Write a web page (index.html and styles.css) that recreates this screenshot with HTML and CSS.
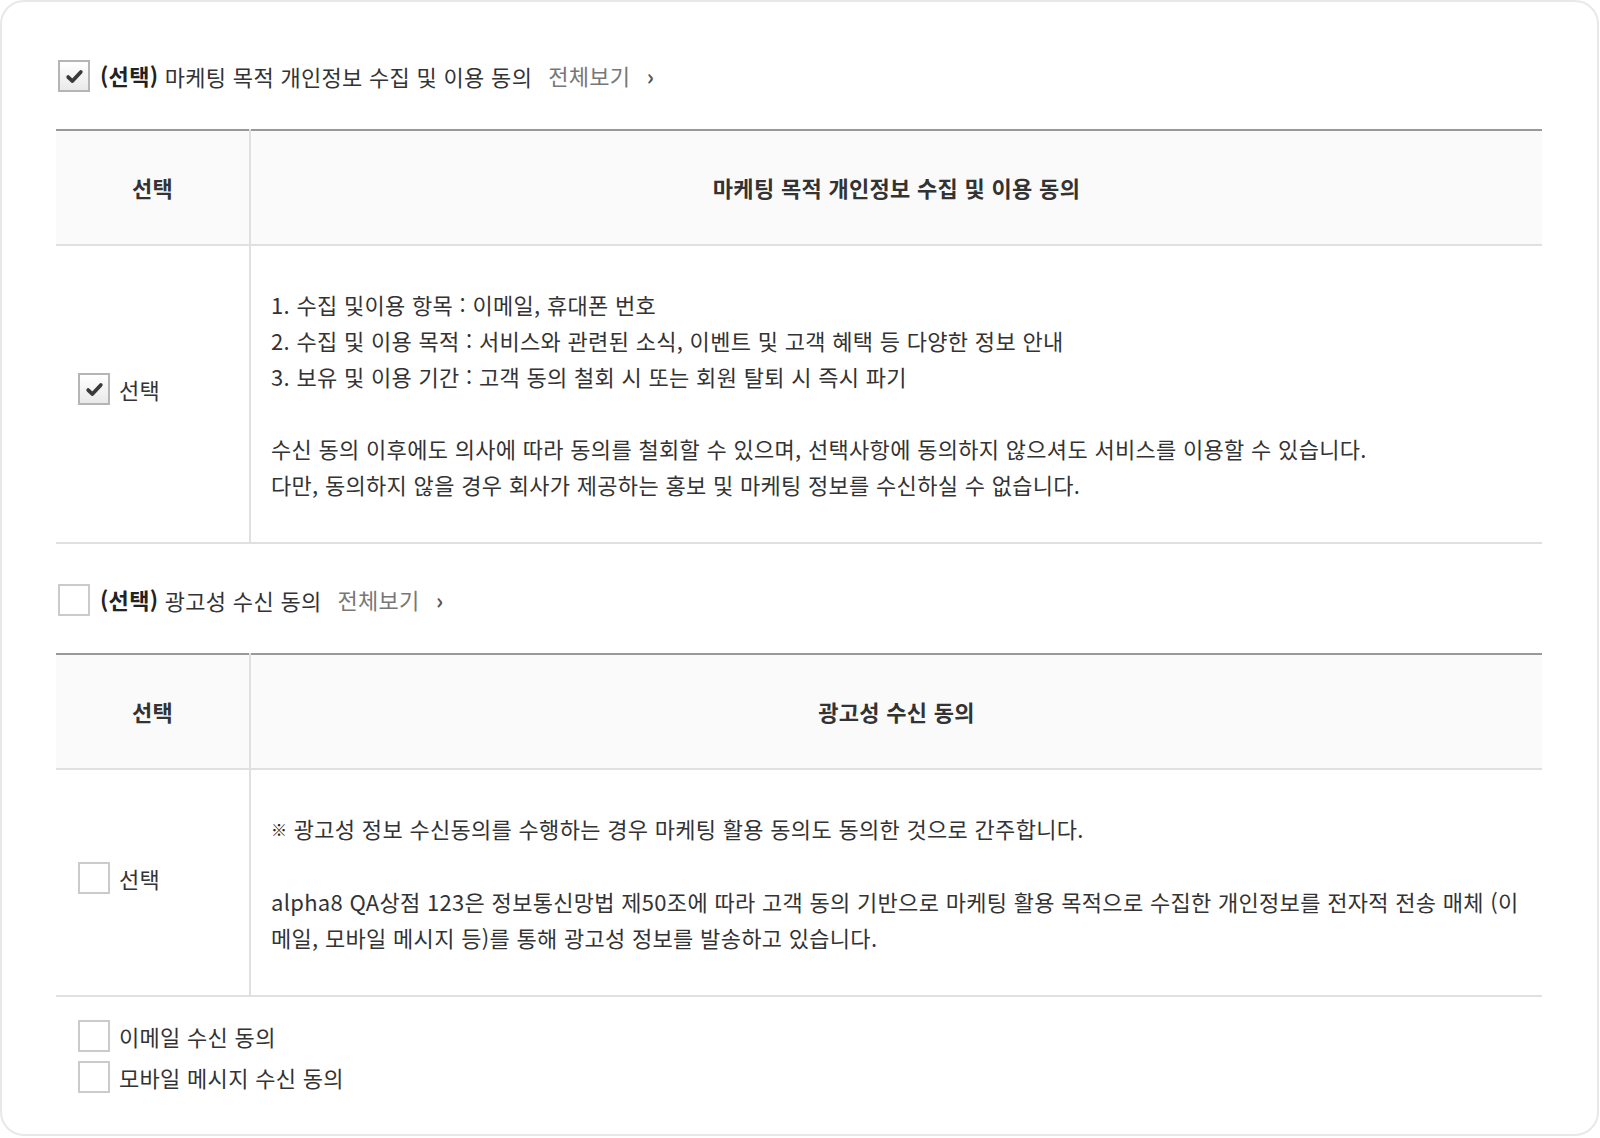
FILE: index.html
```html
<!DOCTYPE html>
<html lang="ko">
<head>
    <meta charset="UTF-8">
    <meta name="viewport" content="width=device-width, initial-scale=1.0">
    <title>마케팅 수신 동의</title>
    <link rel="stylesheet" href="styles.css">
</head>
<body>
    <div class="card">
        <div class="agree-title">
            <span class="box checked">
                <svg viewBox="0 0 20 20"><path d="M4.5 10.5 L8.2 14 L15.5 6"/></svg>
            </span>
            <strong>(선택)</strong>&nbsp;마케팅 목적 개인정보 수집 및 이용 동의
            <a class="more" href="#">전체보기 <span class="arrow">›</span></a>
        </div>

        <table class="terms">
            <thead>
                <tr>
                    <th class="col-sel">선택</th>
                    <th>마케팅 목적 개인정보 수집 및 이용 동의</th>
                </tr>
            </thead>
            <tbody>
                <tr>
                    <td class="col-sel">
                        <label class="check">
                            <span class="box checked">
                                <svg viewBox="0 0 20 20"><path d="M4.5 10.5 L8.2 14 L15.5 6"/></svg>
                            </span>
                            선택
                        </label>
                    </td>
                    <td class="desc">
                        <p>1. 수집 및이용 항목 : 이메일, 휴대폰 번호<br>
                        2. 수집 및 이용 목적 : 서비스와 관련된 소식, 이벤트 및 고객 혜택 등 다양한 정보 안내<br>
                        3. 보유 및 이용 기간 : 고객 동의 철회 시 또는 회원 탈퇴 시 즉시 파기</p>
                        <p>수신 동의 이후에도 의사에 따라 동의를 철회할 수 있으며, 선택사항에 동의하지 않으셔도 서비스를 이용할 수 있습니다.<br>
                        다만, 동의하지 않을 경우 회사가 제공하는 홍보 및 마케팅 정보를 수신하실 수 없습니다.</p>
                    </td>
                </tr>
            </tbody>
        </table>

        <div class="agree-title">
            <span class="box"></span>
            <strong>(선택)</strong>&nbsp;광고성 수신 동의
            <a class="more" href="#">전체보기 <span class="arrow">›</span></a>
        </div>

        <table class="terms">
            <thead>
                <tr>
                    <th class="col-sel">선택</th>
                    <th>광고성 수신 동의</th>
                </tr>
            </thead>
            <tbody>
                <tr>
                    <td class="col-sel">
                        <label class="check">
                            <span class="box"></span>
                            선택
                        </label>
                    </td>
                    <td class="desc">
                        <p><span class="mark">※</span> 광고성 정보 수신동의를 수행하는 경우 마케팅 활용 동의도 동의한 것으로 간주합니다.</p>
                        <p>alpha8 QA상점 123은 정보통신망법 제50조에 따라 고객 동의 기반으로 마케팅 활용 목적으로 수집한 개인정보를 전자적 전송 매체 (이메일, 모바일 메시지 등)를 통해 광고성 정보를 발송하고 있습니다.</p>
                    </td>
                </tr>
            </tbody>
        </table>

        <div class="channels">
            <label class="check"><span class="box"></span>이메일 수신 동의</label>
            <label class="check"><span class="box"></span>모바일 메시지 수신 동의</label>
        </div>
    </div>
</body>
</html>
```

FILE: styles.css
```css
body {
    margin: 0;
    background: #fff;
    font-family: "Noto Sans CJK KR", "Noto Sans", sans-serif;
    color: #333;
    letter-spacing: 0.3px;
}
.card {
    box-sizing: border-box;
    width: 1599px;
    height: 1136px;
    border: 2px solid #e8e8ec;
    border-radius: 24px;
    padding: 58px 55px 0 54px;
}
.agree-title {
    display: flex;
    align-items: center;
    height: 32px;
    margin: 0 0 37px 2px;
    font-size: 22px;
    line-height: 28px;
    color: #333;
}
.agree-title strong,
.agree-title .more {
    position: relative;
    top: -1px;
}
.agree-title .box {
    margin-right: 10px;
}
.agree-title strong {
    font-weight: 700;
    color: #222;
}
.more {
    margin-left: 16px;
    color: #777;
    text-decoration: none;
}
.more .arrow {
    margin-left: 10px;
    font-size: 22px;
    font-weight: 700;
    color: #555;
}
.box {
    box-sizing: border-box;
    display: inline-flex;
    justify-content: center;
    align-items: center;
    width: 32px;
    height: 32px;
    border: 2px solid #cbcbcb;
    background: #fff;
    flex-shrink: 0;
}
.box.checked {
    border-color: #b5b5b5;
    background: linear-gradient(#ffffff, #e9e9e9);
}
.box svg {
    width: 23px;
    height: 23px;
}
.box svg path {
    fill: none;
    stroke: #3a3a3a;
    stroke-width: 3.2;
    stroke-linecap: round;
    stroke-linejoin: round;
}
.terms {
    width: 100%;
    border-collapse: collapse;
    border-top: 2px solid #999;
    border-bottom: 2px solid #e0e0e0;
    margin-bottom: 40px;
    font-size: 22px;
}
.terms th {
    background: #fafafa;
    padding: 40px 20px;
    line-height: 33px;
    font-weight: 700;
    color: #333;
    border-bottom: 2px solid #e0e0e0;
}
.terms .col-sel {
    width: 194px;
    box-sizing: border-box;
    border-right: 2px solid #e0e0e0;
    padding: 0 0 10px 22px;
}
.terms th.col-sel {
    padding: 40px 0;
    text-align: center;
}
.desc {
    padding: 40px 12px 40px 20px;
    line-height: 36px;
    color: #333;
}
.desc p {
    margin: 0 0 36px;
}
.desc p:last-child {
    margin-bottom: 0;
}
.mark {
    font-size: 16px;
    font-weight: 700;
    color: #222;
    vertical-align: 2px;
}
.check {
    display: flex;
    align-items: center;
    gap: 9px;
    font-size: 22px;
    color: #333;
}
.channels {
    display: flex;
    flex-direction: column;
    gap: 9px;
    padding: 0 0 0 22px;
    margin-top: -17px;
}
```
